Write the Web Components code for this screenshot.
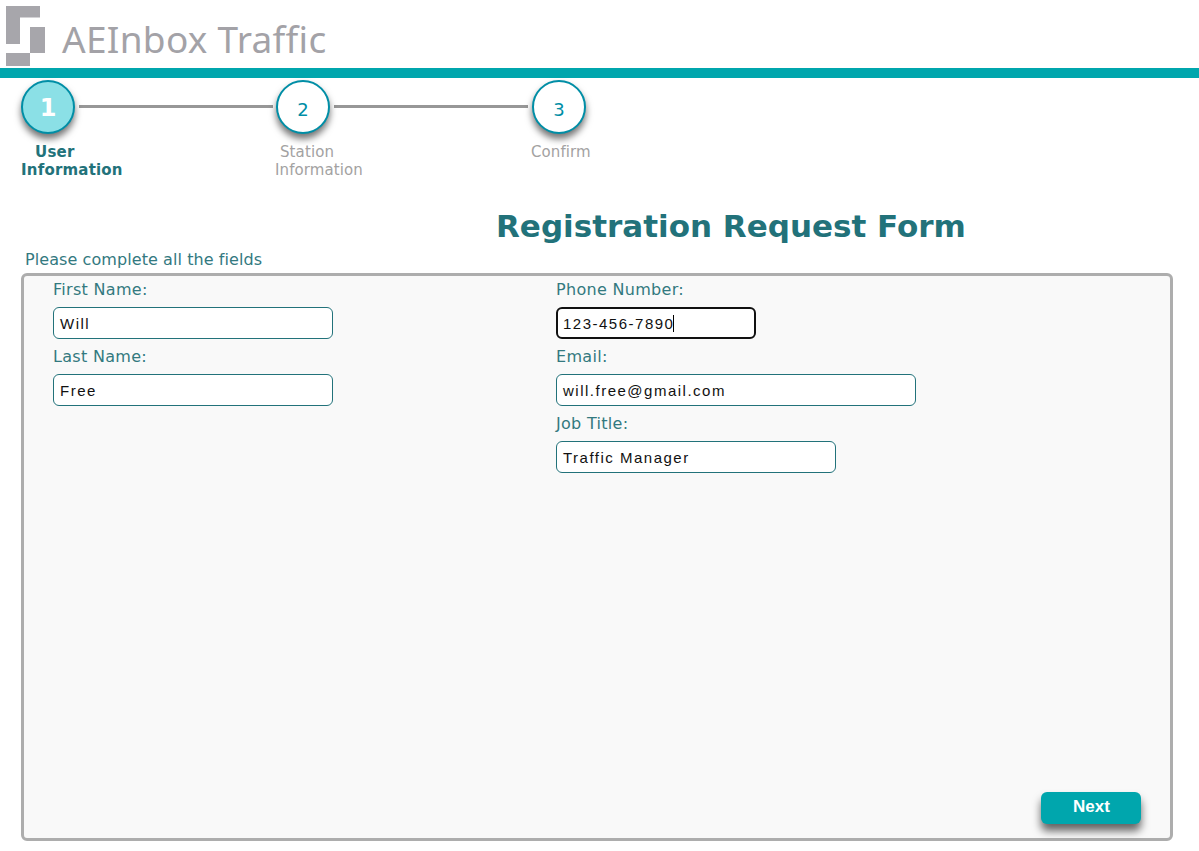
<!DOCTYPE html>
<html>
<head>
<meta charset="utf-8">
<title>Registration Request Form</title>
<style>
  html, body { margin: 0; padding: 0; background: #fff; }
</style>
</head>
<body>
<registration-page></registration-page>

<script>
class AppHeader extends HTMLElement {
  constructor() {
    super();
    this.attachShadow({mode: "open"}).innerHTML = `
    <style>
      :host { display: block; }
      .top { height: 68px; display: flex; align-items: flex-start; padding-left: 6px; box-sizing: border-box; }
      svg { display: block; margin-top: 6px; flex: none; }
      .name {
        font-family: "Noto Sans", sans-serif; font-size: 37px; line-height: 40px;
        color: #a3a2a7; margin: 19px 0 0 17px; letter-spacing: 0.3px;
      }
      .bar { height: 10px; background: #00a6ad; }
    </style>
    <div class="top">
      <svg width="39" height="60" viewBox="0 0 39 60">
        <path fill="#a7a6ab" d="M0 0H34V11.5H14V38H0Z"/>
        <path fill="#a7a6ab" d="M24 21H39V47H24Z"/>
        <path fill="#a7a6ab" d="M0 47H24V60H0Z"/>
      </svg>
      <span class="name">AEInbox Traffic</span>
    </div>
    <div class="bar"></div>`;
  }
}

class StepItem extends HTMLElement {
  constructor() {
    super();
    this.attachShadow({mode: "open"}).innerHTML = `
    <style>
      :host { display: block; width: 54px; flex: none; position: relative; }
      .circle {
        width: 54px; height: 54px; box-sizing: border-box; border-radius: 50%;
        border: 2px solid #008ea6; background: #fff; color: #008ea6;
        display: flex; align-items: center; justify-content: center; padding-top: 4px;
        font: 18px "DejaVu Sans", sans-serif;
        box-shadow: 0 5px 7px rgba(0,0,0,.55);
      }
      :host([active]) .circle { background: #8be0e6; color: #fff; font-weight: bold; font-size: 24px; padding-top: 1px; }
      .label {
        font: 15px/18px "DejaVu Sans", sans-serif; color: #a3a2a2; letter-spacing: .1px;
        margin: 9px 0 0 -1px; white-space: nowrap;
      }
      :host([active]) .label { color: #22727a; font-weight: bold; letter-spacing: .2px; margin-left: 0; }
    </style>
    <div class="circle"><slot name="num"></slot></div>
    <div class="label"><slot></slot></div>`;
  }
}

class StepBar extends HTMLElement {
  constructor() {
    super();
    this.attachShadow({mode: "open"}).innerHTML = `
    <style>
      :host { display: flex; padding: 2px 0 0 21px; height: 124px; }
      ::slotted(hr) {
        width: 194px; height: 3px; flex: none; border: 0; padding: 0; background: #979797;
        margin: 25px 3px 0 4px;
      }
      ::slotted(hr.last) { margin-right: 4px; }
    </style>
    <slot></slot>`;
  }
}

class FormField extends HTMLElement {
  constructor() {
    super();
    this.attachShadow({mode: "open"}).innerHTML = `
    <style>
      :host { display: block; margin-bottom: 4px; }
      label { display: block; height: 31px; font: 16px/27px "DejaVu Sans", sans-serif; letter-spacing: .3px; color: #33797f; }
      .box {
        box-sizing: border-box; height: 32px; width: var(--w, 280px); background: #fff;
        border: 1px solid #22727a; border-radius: 6px; padding: 1px 6px 0;
        font: 15px/30px "Liberation Sans", sans-serif; letter-spacing: 1.5px; color: #111; white-space: nowrap;
        outline: none;
      }
      :host([focused]) .box { border: 2px solid #111; padding: 1px 5px 0; line-height: 28px; }
      :host([focused]) .box::after {
        content: ""; display: inline-block; width: 1px; height: 17px; background: #000;
        vertical-align: -3px; margin-left: -1px;
      }
    </style>
    <label id="l"><slot name="label"></slot></label>
    <div class="box" contenteditable="true" role="textbox" aria-labelledby="l"><slot></slot></div>`;
    this.style.setProperty("--w", (this.getAttribute("width") || 280) + "px");
  }
}

class NextButton extends HTMLElement {
  constructor() {
    super();
    this.attachShadow({mode: "open"}).innerHTML = `
    <style>
      :host { display: block; }
      button {
        display: block; width: 100px; height: 32px; border: 0; border-radius: 6px; padding: 0 0 3px 1px;
        background: #00a6ad; color: #fff; font: bold 17px "Liberation Sans", sans-serif;
        box-shadow: 0 7px 8px rgba(0,0,0,.6); cursor: pointer;
      }
    </style>
    <button><slot></slot></button>`;
  }
}

class FormPanel extends HTMLElement {
  constructor() {
    super();
    this.attachShadow({mode: "open"}).innerHTML = `
    <style>
      :host {
        display: flex; flex-direction: column; box-sizing: border-box;
        height: 568px; margin: 0 26px 0 21px; padding: 0 29px 14px;
        border: 3px solid #adadad; border-radius: 6px; background: #f9f9f9;
      }
      .cols { display: grid; grid-template-columns: 503px 1fr; flex: 1; }
      .foot { display: flex; justify-content: flex-end; }
    </style>
    <div class="cols">
      <div><slot name="left"></slot></div>
      <div><slot name="right"></slot></div>
    </div>
    <div class="foot"><slot name="foot"></slot></div>`;
  }
}

class RegistrationPage extends HTMLElement {
  constructor() {
    super();
    this.attachShadow({mode: "open"}).innerHTML = `
    <style>
      :host { display: block; height: 851px; overflow: hidden; }
      h1 {
        margin: 0; padding-left: 496px; height: 40px; white-space: nowrap;
        font: bold 31px/44px "DejaVu Sans", sans-serif; color: #22727a;
      }
      .hint { margin: 0 0 2px 25px; font: 16px/24px "DejaVu Sans", sans-serif; letter-spacing: .08px; color: #33797f; height: 23px; padding-top: 4px; }
    </style>
    <app-header></app-header>
    <step-bar>
      <step-item active><span slot="num">1</span><span style="display:block;padding-left:14px">User</span>Information</step-item>
      <hr>
      <step-item><span slot="num">2</span><span style="display:block;padding-left:5px">Station</span>Information</step-item>
      <hr class="last">
      <step-item><span slot="num">3</span>Confirm</step-item>
    </step-bar>
    <h1>Registration Request Form</h1>
    <p class="hint">Please complete all the fields</p>
    <form-panel>
      <form-field slot="left"><span slot="label">First Name:</span>Will</form-field>
      <form-field slot="left"><span slot="label">Last Name:</span>Free</form-field>
      <form-field slot="right" width="200" focused><span slot="label">Phone Number:</span>123-456-7890</form-field>
      <form-field slot="right" width="360"><span slot="label">Email:</span>will.free@gmail.com</form-field>
      <form-field slot="right" width="280"><span slot="label">Job Title:</span>Traffic Manager</form-field>
      <next-button slot="foot">Next</next-button>
    </form-panel>`;
  }
}

customElements.define("app-header", AppHeader);
customElements.define("step-item", StepItem);
customElements.define("step-bar", StepBar);
customElements.define("form-field", FormField);
customElements.define("next-button", NextButton);
customElements.define("form-panel", FormPanel);
customElements.define("registration-page", RegistrationPage);
</script>
</body>
</html>
